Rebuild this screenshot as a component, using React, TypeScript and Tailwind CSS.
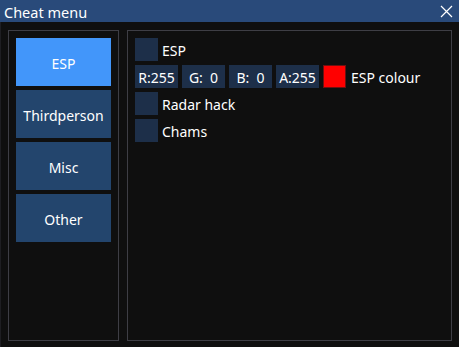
const tabs = ["ESP", "Thirdperson", "Misc", "Other"]

function Checkbox({ label }: { label: string }) {
  return (
    <div className="flex items-center gap-[4px] h-[23px]">
      <div className="w-[23px] h-[23px] bg-[#1d2f49]" />
      <span className="leading-none pt-[2px]">{label}</span>
    </div>
  )
}

function Component({ text }: { text: string }) {
  return (
    <div className="w-[43px] h-[23px] bg-[#1d2f49] flex items-center justify-center whitespace-pre leading-none pt-[2px]">
      {text}
    </div>
  )
}

export default function App() {
  return (
    <div
      className="w-[459px] h-[347px] bg-[#0f0f0f] text-white text-[14px] flex flex-col border-l border-[#1e1e22]"
      style={{ fontFamily: '"Noto Sans", "Open Sans", sans-serif' }}
    >
      <div className="h-[22px] bg-[#294a7a] flex items-center justify-between pl-[4px] pr-[6px] -ml-px">
        <span className="leading-none pt-[2px] text-[14.5px]">Cheat menu</span>
        <svg width="13" height="13" viewBox="0 0 13 13" className="mt-px">
          <path d="M1 1 L12 12 M12 1 L1 12" stroke="#ffffff" strokeWidth="1.2" />
        </svg>
      </div>
      <div className="flex gap-[8px] pt-[8px] pl-[7px]">
        <div className="w-[111px] h-[311px] border border-[#3e3e45] p-[7px] flex flex-col gap-[4px]">
          {tabs.map((t, i) => (
            <div
              key={t}
              className={
                i === 0
                  ? "h-[48px] bg-[#4296fa] flex items-center justify-center leading-none pt-[3px]"
                  : "h-[48px] bg-[#23456d] flex items-center justify-center leading-none pt-[3px]"
              }
            >
              {t}
            </div>
          ))}
        </div>
        <div className="w-[325px] h-[311px] border border-[#3e3e45] p-[7px] flex flex-col gap-[4px]">
          <Checkbox label="ESP" />
          <div className="flex items-center gap-[4px] h-[23px]">
            <Component text="R:255" />
            <Component text="G:  0" />
            <Component text="B:  0" />
            <Component text="A:255" />
            <div className="w-[23px] h-[23px] bg-[#ff0000] border border-[#6e1010]" />
            <span className="leading-none ml-px pt-[2px]">ESP colour</span>
          </div>
          <Checkbox label="Radar hack" />
          <Checkbox label="Chams" />
        </div>
      </div>
    </div>
  )
}
